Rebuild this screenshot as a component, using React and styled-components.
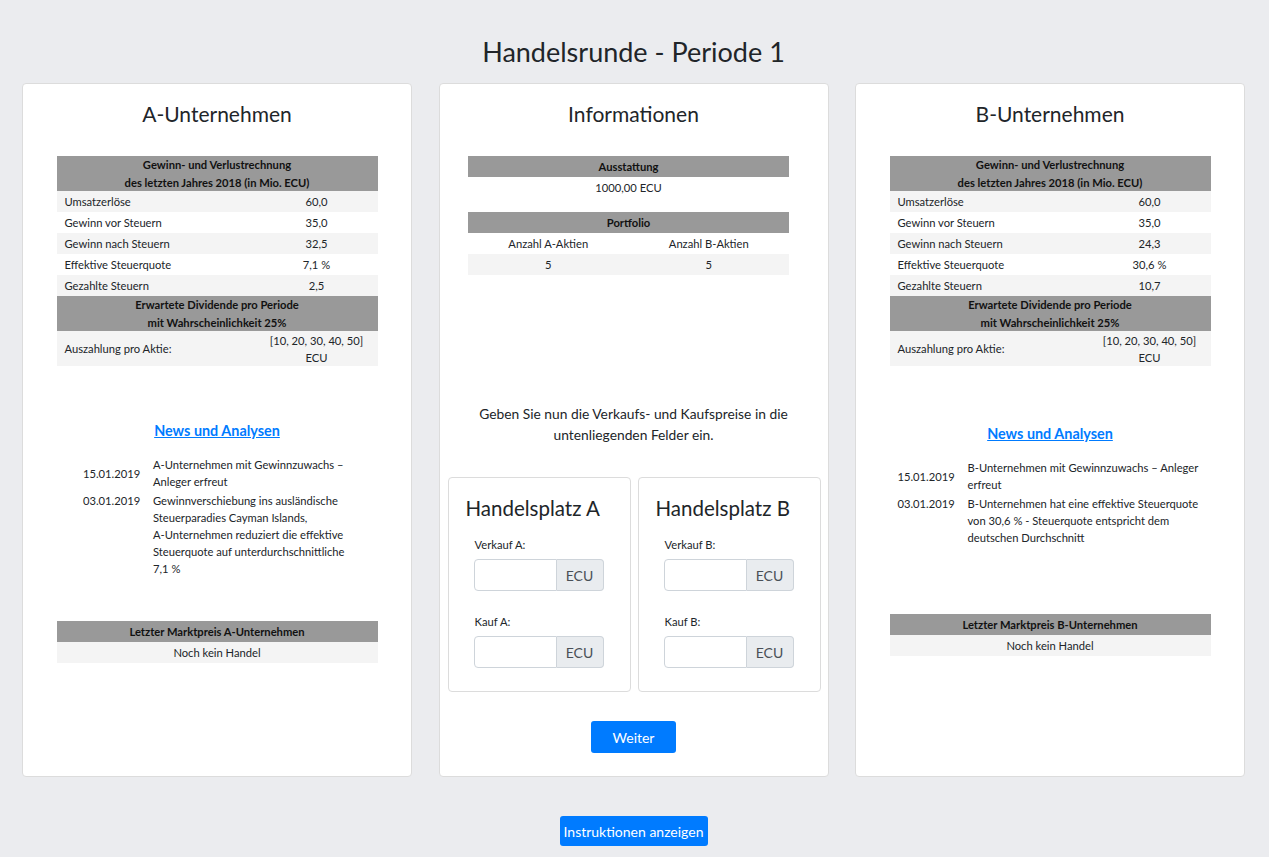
import React from "react";
import styled, { createGlobalStyle } from "styled-components";

const GlobalStyle = createGlobalStyle`
  body {
    margin: 0;
    background: #ebecef;
    font-family: Lato, "Liberation Sans", sans-serif;
    color: #212529;
  }
`;

const Page = styled.div`
  padding: 35px 24px 11px 22px;
  display: flex;
  flex-direction: column;
  align-items: center;
`;

const PageTitle = styled.h1`
  margin: 0 0 14px;
  font-size: 27px;
  line-height: 34px;
  font-weight: 400;
`;

const Columns = styled.div`
  width: 100%;
  display: grid;
  grid-template-columns: repeat(3, minmax(0, 1fr));
  gap: 26.5px;
`;

const Card = styled.div`
  background: #fff;
  border: 1px solid #dcdcdc;
  border-radius: 4px;
  padding: 15px 0 23px;
  display: flex;
  flex-direction: column;
`;

const CardTitle = styled.h4`
  margin: 0 0 27px;
  font-size: 21px;
  line-height: 30px;
  font-weight: 400;
  text-align: center;
`;

const DataTable = styled.table`
  width: 321px;
  margin: ${(p) => p.$mt || 0}px auto 0;
  ${(p) => (p.$shift ? `position: relative; left: -${p.$shift}px;` : "")}
  border-collapse: collapse;
  table-layout: fixed;
  font-size: 11.2px;
`;

const Head = styled.th`
  background: #999999;
  height: 21px;
  padding: 0;
  line-height: 17.5px;
  font-weight: 700;
  text-align: center;
  color: #111;
`;

const Row = styled.tr`
  background: ${(p) => (p.$striped ? "#f4f4f4" : "#fff")};
`;

const Cell = styled.td`
  height: 20px;
  padding: 0.5px 8px;
  line-height: 17px;
  text-align: ${(p) => p.$align || "left"};
`;

const NewsHeading = styled.a`
  display: block;
  margin-top: ${(p) => p.$mt}px;
  font-size: 14.4px;
  line-height: 22px;
  font-weight: 700;
  text-align: center;
  color: #007bff;
  text-decoration: underline;
`;

const NewsList = styled.div`
  width: ${(p) => p.$width}px;
  margin: 13px auto 0;
  display: grid;
  grid-template-columns: 78px 1fr;
  font-size: 11.2px;
  line-height: 17px;
`;

const NewsDate = styled.div`
  padding: 1px 0 1px 8px;
  align-self: ${(p) => (p.$top ? "start" : "center")};
`;

const NewsText = styled.div`
  padding: 1px 0;
`;

const Line = styled.span`
  display: block;
  white-space: nowrap;
`;

const Instruction = styled.p`
  width: 320px;
  margin: 128px auto 0;
  font-size: 13.8px;
  line-height: 21px;
  text-align: center;
`;

const Markets = styled.div`
  display: flex;
  gap: 7px;
  padding: 0 7px 0 8px;
  margin-top: 32px;
`;

const MarketCard = styled.div`
  flex: 1;
  min-width: 0;
  border: 1px solid #dcdcdc;
  border-radius: 4px;
  padding: 16px 0 23px;
`;

const MarketTitle = styled.h4`
  margin: 0 0 14px;
  padding-left: 17px;
  font-size: 20.5px;
  line-height: 28px;
  font-weight: 400;
`;

const Field = styled.div`
  padding: 0 26px 0 25px;
  margin-top: ${(p) => p.$mt || 0}px;
`;

const Label = styled.label`
  display: block;
  padding-left: 1px;
  margin-bottom: 5px;
  font-size: 11.2px;
  line-height: 18px;
`;

const InputGroup = styled.div`
  display: flex;
  height: 32px;
`;

const Input = styled.input`
  flex: 1;
  min-width: 0;
  box-sizing: border-box;
  border: 1px solid #ced4da;
  border-radius: 4px 0 0 4px;
  padding: 0 8px;
  font-size: 14px;
  font-family: inherit;
  outline: none;
`;

const Addon = styled.span`
  width: 47px;
  box-sizing: border-box;
  display: flex;
  align-items: center;
  justify-content: center;
  background: #e9ecef;
  border: 1px solid #ced4da;
  border-left: none;
  border-radius: 0 4px 4px 0;
  font-size: 14px;
  color: #495057;
`;

const Button = styled.button`
  display: block;
  margin: ${(p) => p.$mt}px auto 0;
  width: ${(p) => p.$w}px;
  height: ${(p) => p.$h}px;
  border: none;
  border-radius: 3px;
  background: #007bff;
  color: #fff;
  font-size: 14px;
  font-family: inherit;
  padding: 0;
`;

const companies = {
  A: {
    figures: ["60,0", "35,0", "32,5", "7,1 %", "2,5"],
    headingTop: 54,
    newsWidth: 284,
    marketTop: 43,
    news: [
      ["15.01.2019", ["A-Unternehmen mit Gewinnzuwachs –", "Anleger erfreut"]],
      [
        "03.01.2019",
        [
          "Gewinnverschiebung ins ausländische",
          "Steuerparadies Cayman Islands,",
          "A-Unternehmen reduziert die effektive",
          "Steuerquote auf unterdurchschnittliche",
          "7,1 %",
        ],
      ],
    ],
  },
  B: {
    figures: ["60,0", "35,0", "24,3", "30,6 %", "10,7"],
    headingTop: 57,
    newsWidth: 321,
    marketTop: 67,
    news: [
      ["15.01.2019", ["B-Unternehmen mit Gewinnzuwachs – Anleger", "erfreut"]],
      [
        "03.01.2019",
        [
          "B-Unternehmen hat eine effektive Steuerquote",
          "von 30,6 % - Steuerquote entspricht dem",
          "deutschen Durchschnitt",
        ],
      ],
    ],
  },
};

const labels = [
  "Umsatzerlöse",
  "Gewinn vor Steuern",
  "Gewinn nach Steuern",
  "Effektive Steuerquote",
  "Gezahlte Steuern",
];

const CompanyCard = ({ name }) => {
  const c = companies[name];
  return (
    <Card>
      <CardTitle>{name}-Unternehmen</CardTitle>
      <DataTable>
        <colgroup>
          <col style={{ width: 199 }} />
          <col />
        </colgroup>
        <tbody>
          <tr>
            <Head colSpan={2}>
              Gewinn- und Verlustrechnung
              <br />
              des letzten Jahres 2018 (in Mio. ECU)
            </Head>
          </tr>
          {labels.map((l, i) => (
            <Row key={l} $striped={i % 2 === 0}>
              <Cell>{l}</Cell>
              <Cell $align="center">{c.figures[i]}</Cell>
            </Row>
          ))}
          <tr>
            <Head colSpan={2}>
              Erwartete Dividende pro Periode
              <br />
              mit Wahrscheinlichkeit 25%
            </Head>
          </tr>
          <Row $striped>
            <Cell>Auszahlung pro Aktie:</Cell>
            <Cell $align="center">
              [10, 20, 30, 40, 50]
              <br />
              ECU
            </Cell>
          </Row>
        </tbody>
      </DataTable>

      <NewsHeading href="#" $mt={c.headingTop}>
        News und Analysen
      </NewsHeading>
      <NewsList $width={c.newsWidth}>
        {c.news.map(([date, lines], i) => (
          <React.Fragment key={date}>
            <NewsDate $top={i > 0}>{date}</NewsDate>
            <NewsText>
              {lines.map((line) => (
                <Line key={line}>{line}</Line>
              ))}
            </NewsText>
          </React.Fragment>
        ))}
      </NewsList>

      <DataTable $mt={c.marketTop}>
        <tbody>
          <tr>
            <Head>Letzter Marktpreis {name}-Unternehmen</Head>
          </tr>
          <Row $striped>
            <Cell $align="center">Noch kein Handel</Cell>
          </Row>
        </tbody>
      </DataTable>
    </Card>
  );
};

const MarketPlace = ({ name }) => (
  <MarketCard>
    <MarketTitle>Handelsplatz {name}</MarketTitle>
    <Field>
      <Label>Verkauf {name}:</Label>
      <InputGroup>
        <Input />
        <Addon>ECU</Addon>
      </InputGroup>
    </Field>
    <Field $mt={22}>
      <Label>Kauf {name}:</Label>
      <InputGroup>
        <Input />
        <Addon>ECU</Addon>
      </InputGroup>
    </Field>
  </MarketCard>
);

const InfoCard = () => (
  <Card>
    <CardTitle>Informationen</CardTitle>
    <DataTable $shift={5}>
      <tbody>
        <tr>
          <Head colSpan={2}>Ausstattung</Head>
        </tr>
        <Row>
          <Cell colSpan={2} $align="center">
            1000,00 ECU
          </Cell>
        </Row>
      </tbody>
    </DataTable>
    <DataTable $shift={5} $mt={14}>
      <tbody>
        <tr>
          <Head colSpan={2}>Portfolio</Head>
        </tr>
        <Row>
          <Cell $align="center">Anzahl A-Aktien</Cell>
          <Cell $align="center">Anzahl B-Aktien</Cell>
        </Row>
        <Row $striped>
          <Cell $align="center">5</Cell>
          <Cell $align="center">5</Cell>
        </Row>
      </tbody>
    </DataTable>

    <Instruction>
      Geben Sie nun die Verkaufs- und Kaufspreise in die untenliegenden Felder
      ein.
    </Instruction>

    <Markets>
      <MarketPlace name="A" />
      <MarketPlace name="B" />
    </Markets>

    <Button $mt={29} $w={85} $h={32}>
      Weiter
    </Button>
  </Card>
);

const App = () => (
  <>
    <GlobalStyle />
    <Page>
      <PageTitle>Handelsrunde - Periode 1</PageTitle>
      <Columns>
        <CompanyCard name="A" />
        <InfoCard />
        <CompanyCard name="B" />
      </Columns>
      <Button $mt={39} $w={148} $h={30}>
        Instruktionen anzeigen
      </Button>
    </Page>
  </>
);

export default App;
